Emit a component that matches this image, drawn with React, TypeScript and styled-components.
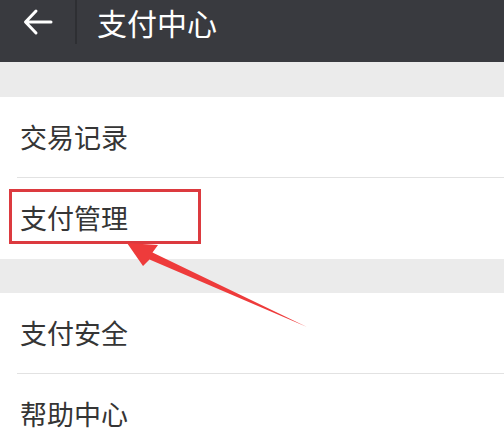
import React from 'react';
import styled, {createGlobalStyle} from 'styled-components';

const GlobalStyle = createGlobalStyle`
  html, body {
    margin: 0;
    padding: 0;
    background: #ebebeb;
  }
  body {
    font-family: "Noto Sans CJK SC", "Noto Sans", sans-serif;
    overflow: hidden;
  }
`;

const StyledPage = styled.div`
  position: relative;
  width: 504px;
  height: 440px;
  overflow: hidden;
  background: #ebebeb;
`;

const StyledNavBar = styled.header`
  height: 62px;
  background: #393a3f;
  box-sizing: border-box;
`;

const StyledNavRow = styled.div`
  display: flex;
  align-items: center;
  height: 44px;
`;

const StyledBack = styled.div`
  width: 77px;
  height: 44px;
  display: flex;
  align-items: center;
  padding-left: 23px;
  box-sizing: border-box;
  border-right: 2px solid #2e2f33;
`;

const StyledTitle = styled.h1`
  margin: 0 0 0 20px;
  font-size: 30px;
  font-weight: 400;
  color: #ffffff;
  line-height: 44px;
`;

const StyledGroup = styled.section<{gap: number}>`
  margin-top: ${p => p.gap}px;
  background: #ffffff;
`;

const StyledRow = styled.div<{last?: boolean}>`
  position: relative;
  height: 81px;
  display: flex;
  align-items: center;
  padding: 0 0 3px 20px;
  box-sizing: border-box;
  font-size: 27px;
  color: #353535;

  &::after {
    content: '';
    display: ${p => (p.last ? 'none' : 'block')};
    position: absolute;
    left: 17px;
    right: 0;
    bottom: 0;
    height: 1px;
    background: #e2e2e2;
  }
`;

const StyledHighlight = styled.span`
  position: absolute;
  left: 9px;
  top: 11px;
  width: 192px;
  height: 55px;
  border: 3px solid #dc3a3f;
  box-sizing: border-box;
`;

const StyledPointer = styled.svg`
  position: absolute;
  left: 0;
  top: 0;
  pointer-events: none;
`;

const groups = [
  {gap: 35, items: ['交易记录', '支付管理']},
  {gap: 34, items: ['支付安全', '帮助中心']},
];

function App() {
  return (
    <>
      <GlobalStyle />
      <StyledPage>
        <StyledNavBar>
          <StyledNavRow>
            <StyledBack>
              <svg width="30" height="28" viewBox="0 0 30 28">
                <path d="M28 14H3M13 3L2.5 14L13 25" fill="none" stroke="#ffffff" strokeWidth="3" strokeLinecap="round" strokeLinejoin="round" />
              </svg>
            </StyledBack>
            <StyledTitle>支付中心</StyledTitle>
          </StyledNavRow>
        </StyledNavBar>
        {groups.map((g, gi) => (
          <StyledGroup key={gi} gap={g.gap}>
            {g.items.map((label, i) => (
              <StyledRow key={label} last={i === g.items.length - 1}>
                {label}
                {label === '支付管理' && <StyledHighlight />}
              </StyledRow>
            ))}
          </StyledGroup>
        ))}
        <StyledPointer width="504" height="440" viewBox="0 0 504 440">
          <polygon points="127,243 158,245 152.5,252.5 307,327 149.5,259.5 143,266" fill="#ee3b3b" />
        </StyledPointer>
      </StyledPage>
    </>
  );
}

export default App;
